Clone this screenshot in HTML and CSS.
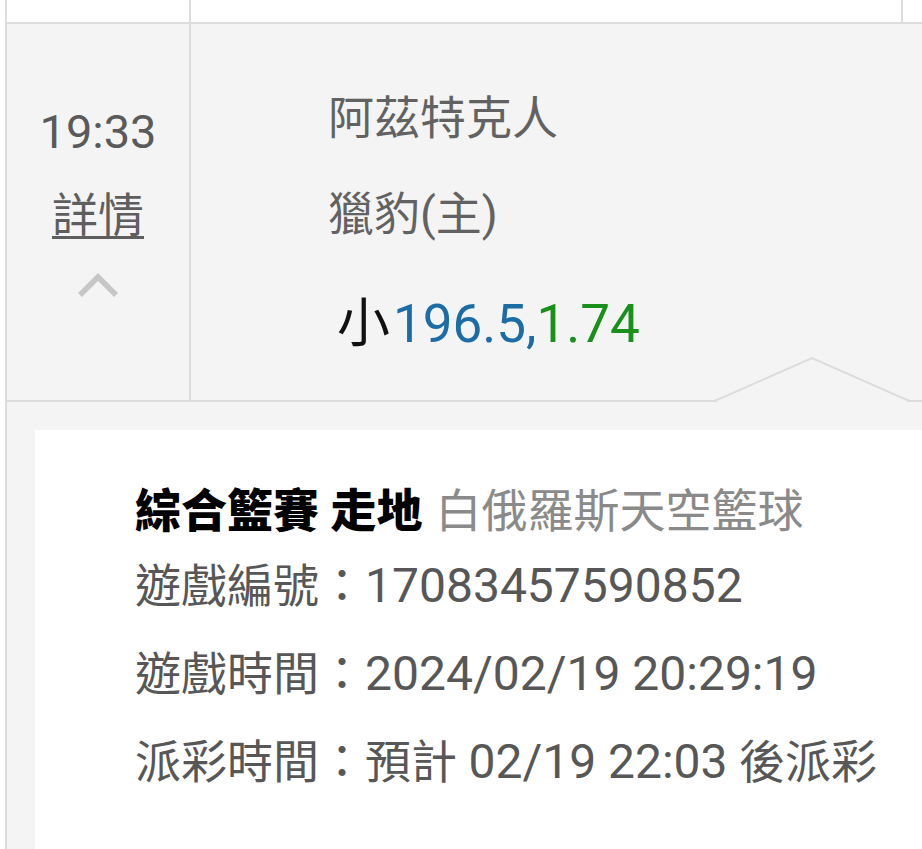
FILE: index.html
```html
<!DOCTYPE html>
<html lang="zh-Hant">
<head>
<meta charset="utf-8">
<title>注單詳情</title>
<link rel="stylesheet" href="styles.css">
</head>
<body>
<div class="list">
  <div class="row row-top">
    <div class="c-time"></div>
    <div class="c-main"></div>
    <div class="c-extra"></div>
  </div>
  <div class="row row-match">
    <div class="c-time">
      <div class="time">19:33</div>
      <a class="detail-link">詳情</a>
      <svg class="chevron" width="44" height="28" viewBox="0 0 44 28" aria-hidden="true">
        <polyline points="4,25 22,7 40,25" fill="none" stroke="#c6c6c6" stroke-width="5.5"/>
      </svg>
    </div>
    <div class="c-main">
      <div class="team">阿茲特克人</div>
      <div class="team">獵豹(主)</div>
      <div class="bet">小<span class="line">196.5,</span><span class="odds">1.74</span></div>
    </div>
    <div class="c-extra"></div>
    <svg class="notch" width="194" height="48" viewBox="0 0 194 48" aria-hidden="true">
      <polygon points="2,44 97,2 192,44 192,48 2,48" fill="#f4f4f4"/>
      <polyline points="0,44 2,44 97,2 192,44 194,44" fill="none" stroke="#dcdcdc" stroke-width="2"/>
    </svg>
  </div>
  <div class="detail-panel">
    <div class="card">
      <div class="card-title"><b class="sport">綜合籃賽 走地</b><span class="league">白俄羅斯天空籃球</span></div>
      <div class="info">遊戲編號：<span class="val">17083457590852</span></div>
      <div class="info">遊戲時間：<span class="val">2024/02/19 20:29:19</span></div>
      <div class="info">派彩時間：預計 <span class="val">02/19 22:03</span> 後派彩</div>
    </div>
  </div>
</div>
</body>
</html>
```

FILE: styles.css
```css
html, body {
  margin: 0;
  padding: 0;
  background: #ffffff;
}

body {
  font-family: Roboto, "Noto Sans CJK TC", sans-serif;
  width: 922px;
  height: 849px;
  overflow: hidden;
}

.list {
  margin-left: 5px;
  border-left: 2px solid #dcdcdc;
}

.row {
  display: flex;
  border-bottom: 2px solid #dcdcdc;
}

.row-top {
  height: 22px;
  background: #ffffff;
}

.row-match {
  position: relative;
  height: 376px;
  background: #f4f4f4;
}

.c-time {
  width: 182px;
  flex: none;
  border-right: 2px solid #dcdcdc;
  display: flex;
  flex-direction: column;
  align-items: center;
}

.c-main {
  width: 710px;
  flex: none;
  border-right: 2px solid #dcdcdc;
}

.c-extra {
  flex: 1;
}

.row-match .c-time {
  padding-top: 81px;
}

.time {
  font-size: 47px;
  line-height: 54px;
  color: #5a5a5a;
}

.detail-link {
  margin-top: 29px;
  font-size: 46px;
  line-height: 54px;
  color: #5e5e5e;
  text-decoration: underline;
  text-decoration-thickness: 3px;
  text-underline-offset: 5px;
}

.chevron {
  display: block;
  margin-top: 28px;
}

.row-match .c-main {
  padding-left: 137px;
  padding-top: 46px;
}

.team {
  font-size: 46px;
  line-height: 96px;
  color: #626262;
}

.bet {
  margin-top: 14px;
  padding-left: 9px;
  font-size: 53px;
  line-height: 96px;
  color: #111111;
}

.bet .line {
  margin-left: 3px;
  color: #1c6ca6;
}

.bet .odds {
  color: #19901a;
}

.notch {
  position: absolute;
  left: 708px;
  bottom: -4px;
}

.detail-panel {
  background: #f4f4f4;
  padding: 28px 0 0 28px;
}

.card {
  background: #ffffff;
  padding: 50px 0 80px 100px;
}

.card-title {
  font-size: 46px;
  line-height: 62px;
  white-space: nowrap;
}

.sport {
  color: #000000;
  font-weight: 900;
}

.league {
  margin-left: 13px;
  color: #8a8a8a;
}

.info {
  font-size: 46px;
  line-height: 88px;
  color: #575757;
  white-space: nowrap;
}

.info .val {
  font-size: 48px;
}
```
